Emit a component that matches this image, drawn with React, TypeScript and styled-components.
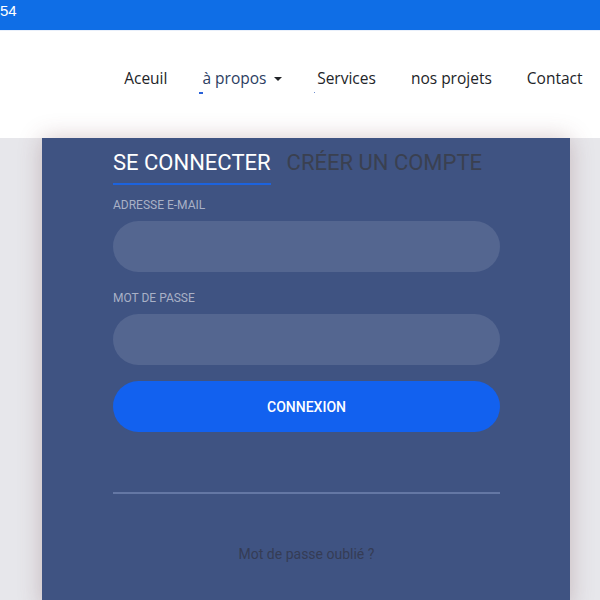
import React from "react";
import styled, { createGlobalStyle } from "styled-components";

const GlobalStyle = createGlobalStyle`
  html, body { margin: 0; padding: 0; }
  body {
    background: #e7e7eb;
    font-family: "Roboto", "Liberation Sans", sans-serif;
    overflow: hidden;
  }
  * { box-sizing: border-box; }
`;

const TopBar = styled.div`
  height: 31px;
  background: #0f6ee6;
  color: #ffffff;
  font-family: "Liberation Sans", Arial, sans-serif;
  font-size: 15px;
  line-height: 16px;
  padding-top: 3px;
  border-bottom: 1px solid #e9f0fb;
`;

const Counter = styled.span`
  display: inline-block;
  margin-left: 0;
`;

const NavBar = styled.nav`
  height: 107px;
  background: #ffffff;
  display: flex;
  justify-content: flex-end;
  align-items: flex-start;
  padding-top: 35px;
`;

const NavList = styled.ul`
  list-style: none;
  margin: 0;
  padding: 0;
  display: flex;
`;

const NavLink = styled.a<{ $active?: boolean; $mark?: "dash" | "dot" }>`
  position: relative;
  display: block;
  padding: 0 17.5px;
  font-family: "Open Sans", sans-serif;
  font-size: 15.5px;
  line-height: 24px;
  color: ${(p) => (p.$active ? "#2c3d62" : "#222428")};
  text-decoration: none;
  &::after {
    content: "";
    display: ${(p) => (p.$mark ? "block" : "none")};
    position: absolute;
    left: 14px;
    top: 26px;
    height: ${(p) => (p.$mark === "dash" ? "2px" : "1px")};
    width: ${(p) => (p.$mark === "dash" ? "4px" : "1px")};
    background: ${(p) => (p.$mark === "dash" ? "#2a62d8" : "#6f8fd0")};
  }
`;

const Caret = styled.span`
  display: inline-block;
  margin-left: 0.5em;
  vertical-align: 0.2em;
  border-top: 0.3em solid #222428;
  border-left: 0.3em solid transparent;
  border-right: 0.3em solid transparent;
`;

const Stage = styled.main`
  display: flex;
  padding-left: 42px;
`;

const Card = styled.section`
  width: 528px;
  height: 470px;
  background: #3f5382;
  padding: 12px 70px 0 71px;
  box-shadow: 0 0 22px rgba(110, 60, 70, 0.28);
  display: flex;
  flex-direction: column;
`;

const Tabs = styled.div`
  display: flex;
  gap: 16px;
  align-items: flex-start;
`;

const Tab = styled.div<{ $active?: boolean }>`
  font-family: "Roboto", sans-serif;
  font-size: 22px;
  line-height: 26px;
  padding-bottom: 7px;
  color: ${(p) => (p.$active ? "#ffffff" : "#3a4050")};
  border-bottom: 2px solid ${(p) => (p.$active ? "#1c63de" : "transparent")};
`;

const Label = styled.label<{ $top: number }>`
  display: block;
  font-family: "Roboto", sans-serif;
  font-size: 12px;
  line-height: 15px;
  color: #a9b1c6;
  margin-top: ${(p) => p.$top}px;
`;

const Input = styled.div`
  height: 51px;
  border-radius: 26px;
  background: #546690;
  margin-top: 8px;
`;

const Button = styled.button`
  margin-top: 16px;
  height: 51px;
  border: none;
  border-radius: 26px;
  background: #1261ef;
  color: #ffffff;
  font-family: "Roboto", sans-serif;
  font-weight: 500;
  font-size: 14px;
  width: 100%;
`;

const Divider = styled.hr`
  margin: 60px 0 0;
  border: none;
  height: 2px;
  background: #6477a4;
`;

const Forgot = styled.a`
  display: block;
  margin-top: 51px;
  text-align: center;
  font-family: "Roboto", sans-serif;
  font-size: 14px;
  line-height: 18px;
  color: #353c55;
`;

export default function App() {
  return (
    <>
      <GlobalStyle />
      <TopBar>
        <Counter>54</Counter>
      </TopBar>
      <NavBar>
        <NavList>
          <li><NavLink>Aceuil</NavLink></li>
          <li>
            <NavLink $active $mark="dash">
              à propos<Caret />
            </NavLink>
          </li>
          <li><NavLink $mark="dot">Services</NavLink></li>
          <li><NavLink>nos projets</NavLink></li>
          <li><NavLink>Contact</NavLink></li>
        </NavList>
      </NavBar>
      <Stage>
        <Card>
          <Tabs>
            <Tab $active>SE CONNECTER</Tab>
            <Tab>CRÉER UN COMPTE</Tab>
          </Tabs>
          <Label $top={13}>ADRESSE E-MAIL</Label>
          <Input />
          <Label $top={19}>MOT DE PASSE</Label>
          <Input />
          <Button>CONNEXION</Button>
          <Divider />
          <Forgot>Mot de passe oublié ?</Forgot>
        </Card>
      </Stage>
    </>
  );
}
